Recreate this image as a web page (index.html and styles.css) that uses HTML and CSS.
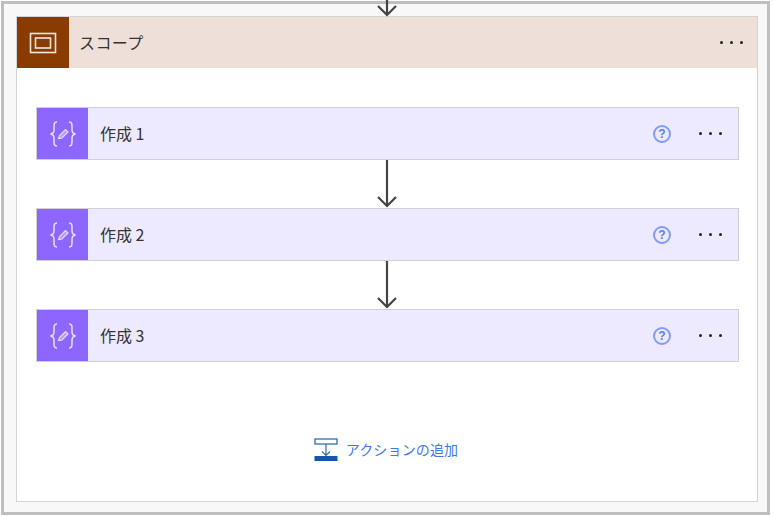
FILE: index.html
```html
<!DOCTYPE html>
<html lang="ja">
<head>
    <meta charset="UTF-8">
    <title>スコープ</title>
    <link rel="stylesheet" href="styles.css">
</head>
<body>
    <div class="frame">
        <svg class="top-arrow" width="24" height="17" viewBox="0 0 24 17">
            <path d="M12 0V15M3 6L12 15L21 6" fill="none" stroke="#444" stroke-width="2.200"/>
        </svg>

        <div class="scope">
            <div class="scope-header">
                <div class="scope-icon">
                    <svg width="28" height="22" viewBox="0 0 28 22">
                        <rect x="1.500" y="1.500" width="25" height="19" fill="none" stroke="#f5e6dc" stroke-width="1.600"/>
                        <rect x="6.500" y="6" width="15" height="10" fill="none" stroke="#f5e6dc" stroke-width="1.600"/>
                    </svg>
                </div>
                <div class="scope-title">スコープ</div>
                <div class="dots"><i></i><i></i><i></i></div>
            </div>

            <div class="scope-body">
                <div class="action">
                    <div class="action-icon">
                        <svg width="28" height="26" viewBox="0 0 28 26">
                            <path d="M8 1C5 1 5 3 5 6V9C5 11 4 12.500 1.500 13C4 13.500 5 15 5 17V20C5 23 5 25 8 25M20 1C23 1 23 3 23 6V9C23 11 24 12.500 26.500 13C24 13.500 23 15 23 17V20C23 23 23 25 20 25" fill="none" stroke="#e9e1ff" stroke-width="1.500"/>
                            <path d="M9.500 17.500L10.500 14.500L16.500 8.500L19 11L13 17Z" fill="#b49dff" stroke="#e9e1ff" stroke-width="1.100"/>
                        </svg>
                    </div>
                    <div class="action-title">作成 1</div>
                    <div class="help">?</div>
                    <div class="dots"><i></i><i></i><i></i></div>
                </div>

                <svg class="arrow" width="24" height="48" viewBox="0 0 24 48">
                    <path d="M12 0V46M3 37L12 46L21 37" fill="none" stroke="#444" stroke-width="2.200"/>
                </svg>

                <div class="action">
                    <div class="action-icon">
                        <svg width="28" height="26" viewBox="0 0 28 26">
                            <path d="M8 1C5 1 5 3 5 6V9C5 11 4 12.500 1.500 13C4 13.500 5 15 5 17V20C5 23 5 25 8 25M20 1C23 1 23 3 23 6V9C23 11 24 12.500 26.500 13C24 13.500 23 15 23 17V20C23 23 23 25 20 25" fill="none" stroke="#e9e1ff" stroke-width="1.500"/>
                            <path d="M9.500 17.500L10.500 14.500L16.500 8.500L19 11L13 17Z" fill="#b49dff" stroke="#e9e1ff" stroke-width="1.100"/>
                        </svg>
                    </div>
                    <div class="action-title">作成 2</div>
                    <div class="help">?</div>
                    <div class="dots"><i></i><i></i><i></i></div>
                </div>

                <svg class="arrow" width="24" height="48" viewBox="0 0 24 48">
                    <path d="M12 0V46M3 37L12 46L21 37" fill="none" stroke="#444" stroke-width="2.200"/>
                </svg>

                <div class="action">
                    <div class="action-icon">
                        <svg width="28" height="26" viewBox="0 0 28 26">
                            <path d="M8 1C5 1 5 3 5 6V9C5 11 4 12.500 1.500 13C4 13.500 5 15 5 17V20C5 23 5 25 8 25M20 1C23 1 23 3 23 6V9C23 11 24 12.500 26.500 13C24 13.500 23 15 23 17V20C23 23 23 25 20 25" fill="none" stroke="#e9e1ff" stroke-width="1.500"/>
                            <path d="M9.500 17.500L10.500 14.500L16.500 8.500L19 11L13 17Z" fill="#b49dff" stroke="#e9e1ff" stroke-width="1.100"/>
                        </svg>
                    </div>
                    <div class="action-title">作成 3</div>
                    <div class="help">?</div>
                    <div class="dots"><i></i><i></i><i></i></div>
                </div>

                <div class="add-action">
                    <svg width="24" height="24" viewBox="0 0 24 24">
                        <rect x="1" y="1" width="22" height="5" fill="none" stroke="#2f6fb5" stroke-width="1.300"/>
                        <path d="M12 6V17M8 13.500L12 17.500L16 13.500" fill="none" stroke="#2f6fb5" stroke-width="1.200"/>
                        <rect x="0.500" y="18" width="23" height="5" fill="#0f5aa8"/>
                    </svg>
                    <span class="add-label">アクションの追加</span>
                </div>
            </div>
        </div>
    </div>
</body>
</html>
```

FILE: styles.css
```css
* {
    box-sizing: border-box;
}

body {
    margin: 0;
    height: 516px;
    overflow: hidden;
    background: #fff;
    font-family: "Noto Sans CJK JP", "Liberation Sans", sans-serif;
    color: #333;
}

.frame {
    position: relative;
    width: 769px;
    height: 514px;
    margin: 1px 0 0 1px;
    padding: 12px;
    background: #f8f8f8;
    border: 3px solid #bfbfbf;
}

.top-arrow {
    position: absolute;
    top: -4px;
    left: 371px;
}

.scope {
    width: 742px;
    height: 486px;
    background: #fff;
    border: 1px solid #d4d4d4;
}

.scope-header {
    display: flex;
    align-items: center;
    height: 51px;
    background: #eee0d8;
}

.scope-icon {
    display: flex;
    align-items: center;
    justify-content: center;
    width: 52px;
    height: 51px;
    background: #8a3b00;
}

.scope-title {
    flex: 1;
    margin-left: 10px;
    margin-top: -2px;
    font-size: 16px;
    letter-spacing: 0.4px;
}

.dots {
    display: flex;
    gap: 7px;
    margin-right: 14px;
}

.dots i {
    width: 3px;
    height: 3px;
    border-radius: 50%;
    background: #222;
}

.scope-body {
    display: flex;
    flex-direction: column;
    align-items: center;
    padding: 39px 18px 0 19px;
}

.action {
    display: flex;
    flex: none;
    align-items: center;
    width: 703px;
    height: 53px;
    background: #ede9ff;
    border: 1px solid #cfcfd8;
}

.action-icon {
    display: flex;
    align-items: center;
    justify-content: center;
    width: 51px;
    height: 51px;
    background: #8c66ff;
}

.action-title {
    flex: 1;
    margin-left: 12px;
    margin-top: -2px;
    font-size: 16px;
}

.help {
    width: 18px;
    height: 18px;
    margin-right: 28px;
    border: 2px solid #7f9bff;
    border-radius: 50%;
    color: #5c7cfa;
    font-family: "Liberation Sans", sans-serif;
    font-size: 12px;
    font-weight: bold;
    line-height: 14px;
    text-align: center;
}

.action .dots {
    margin-right: 16px;
}

.arrow {
    display: block;
    flex: none;
    margin-right: 1px;
}

.add-action {
    display: flex;
    align-items: center;
    gap: 8px;
    margin-top: 76px;
    margin-right: 3px;
    color: #3b79f0;
    font-size: 14px;
}

.add-label {
    margin-top: -2px;
    letter-spacing: 0.15px;
}
```
